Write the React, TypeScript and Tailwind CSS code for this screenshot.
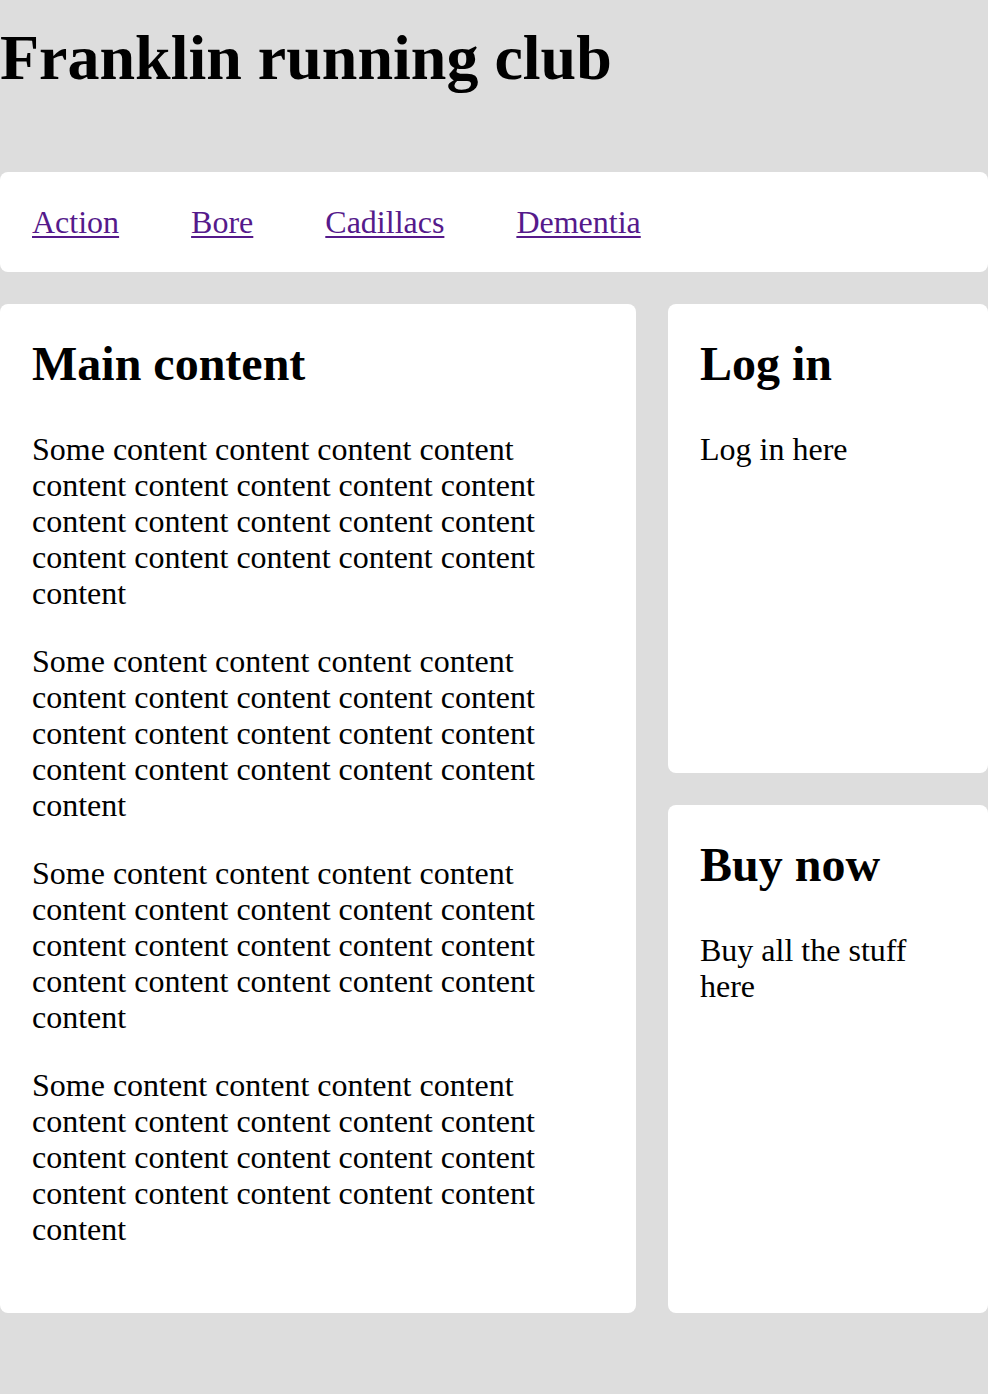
import React from 'react';

const para = 'Some ' + Array(20).fill('content').join(' ');

export default function App() {
  return (
    <div
      className="min-h-screen bg-[#dddddd] text-black pt-[21px] pb-[82px]"
      style={{ fontFamily: '"Liberation Serif", "Times New Roman", serif' }}
    >
      {/* header */}
      <h1 className="text-[64px] leading-[74px] font-bold mb-[77px]">Franklin running club</h1>

      {/* nav */}
      <nav className="bg-white rounded-lg px-8 py-8">
        <ul className="flex gap-[72px] text-[32px] leading-[36px]">
          {['Action', 'Bore', 'Cadillacs', 'Dementia'].map((l) => (
            <li key={l}>
              <a href="#" className="text-[#551a8b] underline underline-offset-[3px] decoration-[2px]">
                {l}
              </a>
            </li>
          ))}
        </ul>
      </nav>

      <div className="grid grid-cols-[1fr_320px] gap-8 mt-8">
        {/* main */}
        <main className="bg-white rounded-lg px-8 pt-8 pb-[34px]">
          <h2 className="text-[48px] leading-[56px] font-bold mb-[39px]">Main content</h2>
          {[0, 1, 2, 3].map((i) => (
            <p key={i} className="text-[32px] leading-[36px] mb-8">
              {para}
            </p>
          ))}
        </main>

        {/* sidebar */}
        <div className="flex flex-col gap-8">
          <section className="bg-white rounded-lg px-8 pt-8 h-[469px]">
            <h2 className="text-[48px] leading-[56px] font-bold mb-[39px]">Log in</h2>
            <p className="text-[32px] leading-[36px]">Log in here</p>
          </section>
          <section className="bg-white rounded-lg px-8 pt-8 flex-1">
            <h2 className="text-[48px] leading-[56px] font-bold mb-[39px]">Buy now</h2>
            <p className="text-[32px] leading-[36px]">Buy all the stuff here</p>
          </section>
        </div>
      </div>
    </div>
  );
}
